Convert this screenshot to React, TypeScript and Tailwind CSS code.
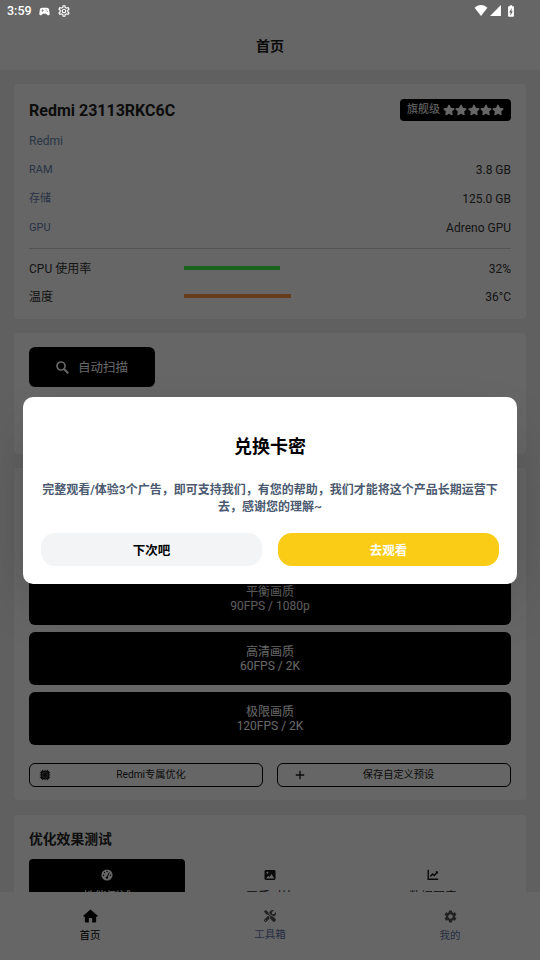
import React from 'react';
import { FaStar, FaTools } from 'react-icons/fa';
import {
  MdOutlineSettings,
  MdSettings,
  MdSignalCellular4Bar,
  MdSportsEsports,
  MdBatteryChargingFull,
} from 'react-icons/md';

interface IconProps {
  className?: string;
}

const specs = [
  { label: 'RAM', value: '3.8 GB' },
  { label: '存储', value: '125.0 GB' },
  { label: 'GPU', value: 'Adreno GPU' },
];

const usages = [
  { label: 'CPU 使用率', value: '32%', width: 96, color: 'bg-[#3dfa45]' },
  { label: '温度', value: '36°C', width: 107, color: 'bg-[#ff9a45]' },
];

const presets = [
  { name: '平衡画质', detail: '90FPS / 1080p' },
  { name: '高清画质', detail: '60FPS / 2K' },
  { name: '极限画质', detail: '120FPS / 2K' },
];

const HomeIcon: React.FC<IconProps> = ({ className }) => (
  <svg viewBox="0 0 16 14" fill="currentColor" className={className}>
    <path d="M8 0 .6 6.400c-.6.600-.300 1.300.5 1.300H2v4.800c0 .8.600 1.500 1.400 1.500H6.200V10c0-.5.400-.9.900-.9h1.800c.5 0 .9.400.9.9v4h2.800c.8 0 1.400-.7 1.400-1.500V7.700h.9c.8 0 1.100-.7.500-1.300z" />
  </svg>
);

const WifiIcon: React.FC<IconProps> = ({ className }) => (
  <svg viewBox="0 0 14 12" fill="currentColor" className={className}>
    <path d="M7 12 0 3.100C1.800 1.200 4.300 0 7 0s5.200 1.200 7 3.100z" />
  </svg>
);

const SearchIcon: React.FC<IconProps> = ({ className }) => (
  <svg viewBox="0 0 13 13" fill="none" stroke="currentColor" className={className}>
    <circle cx="5" cy="5" r="4" strokeWidth="1.700" />
    <path d="m8 8 4.200 4.200" strokeWidth="2.100" />
  </svg>
);

const PlusIcon: React.FC<IconProps> = ({ className }) => (
  <svg viewBox="0 0 10 10" fill="none" stroke="currentColor" className={className}>
    <path d="M5 .8v8.400M.8 5h8.400" strokeWidth="1.300" />
  </svg>
);

const GaugeIcon: React.FC<IconProps> = ({ className }) => (
  <svg viewBox="0 0 12 12" className={className}>
    <circle cx="6" cy="6" r="5.600" fill="currentColor" />
    <g fill="black">
      <circle cx="2.600" cy="6.300" r=".7" />
      <circle cx="3.600" cy="3.600" r=".7" />
      <circle cx="6" cy="2.400" r=".7" />
      <circle cx="9.400" cy="6.300" r=".7" />
      <circle cx="6" cy="8.600" r="1.200" />
    </g>
    <path d="M6 8.600 8.200 3.500" stroke="black" strokeWidth=".9" />
  </svg>
);

const PhotoIcon: React.FC<IconProps> = ({ className }) => (
  <svg viewBox="0 0 12 12" className={className}>
    <rect x=".5" y="1" width="11" height="10" rx="1.400" fill="currentColor" />
    <circle cx="3.400" cy="3.700" r="1" fill="white" />
    <path d="M2 9.500 4.200 6.800l1.300 1.300L7.600 5l2.600 4.500z" fill="white" />
  </svg>
);

const TrendIcon: React.FC<IconProps> = ({ className }) => (
  <svg viewBox="0 0 12 12" fill="none" stroke="currentColor" className={className}>
    <path d="M1.200.8v9.400h10" strokeWidth="1.400" />
    <path d="m3.300 7.400 2.200-2.300 1.800 1.300 3-3.500" strokeWidth="1.500" />
    <path d="M8.600 2.600h2v2" strokeWidth=".8" />
  </svg>
);

const ChipIcon: React.FC<IconProps> = ({ className }) => (
  <svg viewBox="0 0 12 12" stroke="currentColor" fill="none" className={className}>
    <path d="M3.600.8v10.400M6 .8v10.400M8.400.8v10.400M.8 3.600h10.400M.8 6h10.400M.8 8.400h10.400" strokeWidth=".9" />
    <rect x="1.800" y="1.800" width="8.400" height="8.400" rx="1.200" fill="currentColor" stroke="none" />
    <rect x="3.900" y="3.900" width="4.200" height="4.200" stroke="#999" strokeWidth=".5" />
  </svg>
);

function StatusBar() {
  return (
    <div className="absolute inset-x-0 top-0 flex h-[22px] items-center justify-between pl-[7px] pr-[22px] text-white">
      <div className="flex items-center">
        <span className="w-[31px] text-[12.500px] font-medium leading-[22px]">3:59</span>
        <MdSportsEsports className="size-[13px]" />
        <MdOutlineSettings className="ml-[6px] size-[14px]" />
      </div>
      <div className="flex items-center pb-px">
        <WifiIcon className="h-[11px] w-[14px]" />
        <MdSignalCellular4Bar className="ml-px size-[13px]" />
        <MdBatteryChargingFull className="ml-[2px] size-[14px]" />
      </div>
    </div>
  );
}

function DeviceCard() {
  return (
    <section className="h-[235px] shrink-0 rounded-[4px] bg-white px-[15px] pt-[14px]">
      <div className="flex h-[24px] items-center justify-between">
        <h2 className="pt-[2px] text-[16px] font-bold text-[#222]">Redmi 23113RKC6C</h2>
        <div className="flex h-[22px] items-center rounded-[4px] bg-black px-[7px] text-[11px] text-white">
          <span className="pt-px">旗舰级</span>
          <span className="ml-[3px] flex">
            {[1, 2, 3, 4, 5].map((n) => (
              <FaStar key={n} className="mx-[0.100px] size-[12px]" />
            ))}
          </span>
        </div>
      </div>
      <p className="mt-[10px] text-[12px] leading-[18px] text-[#6b86ad]">Redmi</p>
      <div className="mt-[5px] border-b border-[#cfd3d8] pb-[5px]">
        {specs.map((s) => (
          <div key={s.label} className="flex h-[29.300px] items-center justify-between">
            <span className="pt-px text-[11px] text-[#6b7db0]">{s.label}</span>
            <span className="text-[12px] text-[#333]">{s.value}</span>
          </div>
        ))}
      </div>
      <div className="pt-[6px]">
        {usages.map((u) => (
          <div key={u.label} className="flex h-[28px] items-center text-[12px] text-[#333]">
            <span className="w-[155px]">{u.label}</span>
            <span className={`-mt-px h-[4px] ${u.color}`} style={{ width: u.width }} />
            <span className="ml-auto">{u.value}</span>
          </div>
        ))}
      </div>
    </section>
  );
}

function PresetCard() {
  return (
    <section className="flex h-[332px] shrink-0 flex-col rounded-[4px] bg-white px-[15px] pt-[104px]">
      <div className="flex flex-col gap-[7px]">
        {presets.map((p) => (
          <button
            key={p.name}
            className="flex h-[53px] flex-col items-center justify-center rounded-[6px] bg-black text-[12px] leading-[15px] text-white"
          >
            <span className="pt-px">{p.name}</span>
            <span className="-mt-px">{p.detail}</span>
          </button>
        ))}
      </div>
      <div className="mt-[18px] grid grid-cols-2 gap-[14px] text-[10.200px]">
        <button className="flex h-[24px] items-center rounded-[6px] border border-black pb-px pl-[9px] pr-[11px]">
          <ChipIcon className="size-[12px]" />
          <span className="flex-1 text-center">Redmi专属优化</span>
        </button>
        <button className="flex h-[24px] items-center rounded-[6px] border border-black pb-px pl-[17px] pr-[18px]">
          <PlusIcon className="size-[10px]" />
          <span className="flex-1 text-center">保存自定义预设</span>
        </button>
      </div>
    </section>
  );
}

function TestCard() {
  return (
    <section className="mt-px h-[140px] shrink-0 rounded-[4px] bg-white px-[15px] pt-[13px]">
      <h3 className="text-[13.800px] font-bold leading-[22px] text-[#222]">优化效果测试</h3>
      <div className="mt-[9px] flex gap-[7px] text-[12px] leading-[16px]">
        <div className="flex h-[52px] w-[156px] flex-col items-center rounded-[4px] bg-black pt-[10px] text-white">
          <GaugeIcon className="size-[12px]" />
          <span className="mt-[8px]">性能测试</span>
        </div>
        <div className="flex h-[52px] w-[156px] flex-col items-center pt-[10px]">
          <PhotoIcon className="size-[12px]" />
          <span className="mt-[8px]">画质对比</span>
        </div>
        <div className="flex h-[52px] w-[156px] flex-col items-center pt-[10px]">
          <TrendIcon className="size-[12px]" />
          <span className="mt-[8px]">数据图表</span>
        </div>
      </div>
    </section>
  );
}

function TabBar() {
  return (
    <nav className="flex h-[68px] shrink-0 bg-white text-[10.500px] leading-[16px] text-[#6473a6]">
      <div className="flex flex-1 flex-col items-center pt-[17px] text-black">
        <HomeIcon className="h-[14px] w-[15px]" />
        <span className="mt-[5px]">首页</span>
      </div>
      <div className="flex flex-1 flex-col items-center pt-[18px]">
        <FaTools className="size-[12px] text-[#555]" />
        <span className="mt-[5px]">工具箱</span>
      </div>
      <div className="flex flex-1 flex-col items-center pt-[17px]">
        <MdSettings className="size-[15px] text-[#555]" />
        <span className="mt-[4px]">我的</span>
      </div>
    </nav>
  );
}

function RedeemDialog() {
  return (
    <div className="absolute inset-0 bg-black/60">
      <div className="mx-auto mt-[397px] flex h-[187px] w-[494px] flex-col rounded-[10px] bg-white px-[18px] pt-[37px] text-center shadow-2xl">
        <h2 className="text-[18px] font-bold leading-[26px] text-black">兑换卡密</h2>
        <p className="mt-[22px] whitespace-nowrap text-[12px] font-semibold leading-[17px] text-[#4b5a70]">
          完整观看/体验3个广告，即可支持我们，有您的帮助，我们才能将这个产品长期运营下
          <br />
          去，感谢您的理解~
        </p>
        <div className="mt-[17px] flex gap-[16px] text-[12.500px] font-bold">
          <button className="h-[33px] flex-1 rounded-[14px] bg-[#f3f4f6] pt-[3px] text-black">下次吧</button>
          <button className="h-[33px] flex-1 rounded-[14px] bg-[#facc15] pt-[3px] text-white">去观看</button>
        </div>
      </div>
    </div>
  );
}

export default function App() {
  return (
    <div className="relative flex h-[960px] w-[540px] flex-col overflow-hidden bg-[#f1f1f1] font-[Roboto,'Noto_Sans_CJK_SC',sans-serif] text-[#1a1a1a]">
      <header className="flex h-[70px] shrink-0 items-center justify-center bg-white pt-[23px] text-[14px] font-bold">
        首页
      </header>
      <main className="flex min-h-0 flex-1 flex-col gap-[14px] overflow-hidden px-[14px] pt-[14px]">
        <DeviceCard />
        <section className="h-[121px] shrink-0 rounded-[4px] bg-white px-[15px] pt-[14px]">
          <button className="flex h-[40px] w-[126px] items-center justify-center gap-[9px] rounded-[6px] bg-black text-[12.500px] text-white">
            <SearchIcon className="size-[13px]" />
            <span className="pt-[2px]">自动扫描</span>
          </button>
        </section>
        <PresetCard />
        <TestCard />
      </main>
      <TabBar />
      <RedeemDialog />
      <StatusBar />
    </div>
  );
}
